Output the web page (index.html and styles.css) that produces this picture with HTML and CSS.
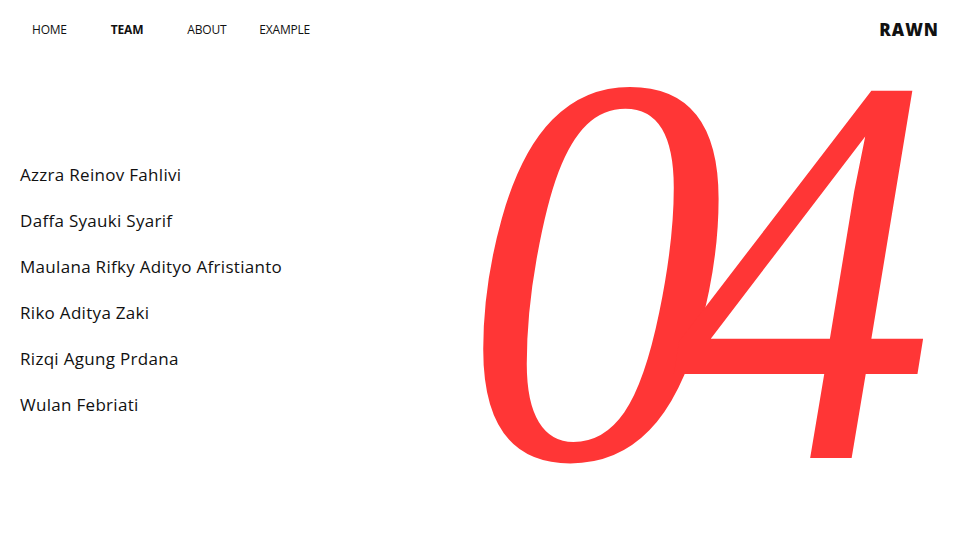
FILE: index.html
```html
<!DOCTYPE html>
<html>
<head>
<meta charset="utf-8">
<link rel="stylesheet" href="styles.css">
</head>
<body>
<header class="topbar">
  <nav class="nav">
    <a class="nav-link" href="#">HOME</a>
    <a class="nav-link active" href="#">TEAM</a>
    <a class="nav-link" href="#">ABOUT</a>
    <a class="nav-link" href="#">EXAMPLE</a>
  </nav>
  <div class="brand">RAWN</div>
</header>
<main class="content">
  <ul class="names">
    <li>Azzra Reinov Fahlivi</li>
    <li>Daffa Syauki Syarif</li>
    <li>Maulana Rifky Adityo Afristianto</li>
    <li>Riko Aditya Zaki</li>
    <li>Rizqi Agung Prdana</li>
    <li>Wulan Febriati</li>
  </ul>
  <div class="big-number">04</div>
</main>
</body>
</html>
```
FILE: styles.css
```css
* { box-sizing: border-box; }
html, body { margin: 0; padding: 0; background: #fff; }
body {
  width: 960px;
  height: 540px;
  overflow: hidden;
  font-family: "Open Sans", "Liberation Sans", sans-serif;
  color: #111;
}
.topbar {
  display: flex;
  justify-content: space-between;
  align-items: center;
  height: 58px;
  padding: 0 21px 0 32px;
}
.nav { display: flex; }
.nav-link {
  font-size: 12px;
  color: #111;
  text-decoration: none;
  margin-right: 44px;
  letter-spacing: -0.2px;
}
.nav-link.active { font-weight: 700; margin-right: 44px; }
.nav-link:nth-child(3) { margin-right: 33px; }
.brand {
  font-size: 17px;
  font-weight: 800;
  letter-spacing: 1px;
}
.content {
  display: flex;
  align-items: flex-start;
}
.names {
  list-style: none;
  width: 463px;
  flex: none;
  margin: 94px 0 0 0;
  padding: 0 0 0 20px;
}
.names li {
  font-size: 17px;
  line-height: 46px;
  letter-spacing: 0.3px;
  white-space: nowrap;
}
.big-number {
  font-family: "Liberation Serif", serif;
  font-style: italic;
  font-size: 558px;
  line-height: 400px;
  height: 400px;
  padding-right: 60px;
  overflow: hidden;
  color: #ff3636;
  letter-spacing: -56px;
  margin-top: 12px;
  transform: scaleX(0.94);
  transform-origin: left center;
  white-space: nowrap;
}
```
